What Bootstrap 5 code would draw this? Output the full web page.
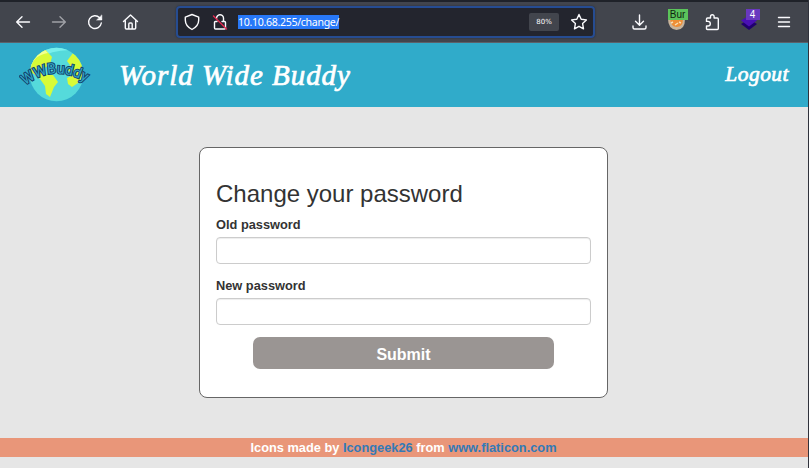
<!DOCTYPE html>
<html lang="en">
<head>
<meta charset="utf-8">
<meta name="viewport" content="width=device-width, initial-scale=1">
<title>World Wide Buddy</title>
<link href="https://cdn.jsdelivr.net/npm/bootstrap@5.3.0/dist/css/bootstrap.min.css" rel="stylesheet">
<style>
body{font-family:"Liberation Sans",Arial,sans-serif;background:#e6e6e6;color:#333;height:468px;overflow:hidden;border-right:1px solid #30323c}
svg{display:block;flex:none}
.toolbar{height:43px;background:#42454d;border-top:2px solid #1f2229;border-bottom:1px solid #5c616a;padding:0 17px 0 14px}
.line-icon{fill:none;stroke:#fbfbfe;stroke-width:1.4;stroke-linecap:round;stroke-linejoin:round}
.nav-icons{width:162px;gap:18px}
.address{width:419px;height:32px;background:#23252e;border:2px solid #264c91;border-radius:4px;padding:0 5px 0 6px;box-shadow:0 0 2px #292c35}
.lock-icon{margin-left:11px}
.url{font:10.6px/14px "Noto Sans",sans-serif;color:#fff;background:#2878f8;margin-left:9px;letter-spacing:-.32px}
.zoom-level{font:7px/18px "DejaVu Sans",sans-serif;background:#42454d;color:#fbfbfe;width:30px;height:18px;border-radius:2px;text-align:center}
.star-icon{margin-left:11px}
.ext-icons{gap:19.5px}
.ext-badge{top:-4px;font:10px/11px "Liberation Sans",sans-serif;text-align:center}
.badge-word{left:1px;width:20px;background:#5bc45b;color:#10250f}
.badge-count{left:6px;width:14px;background:#6938bf;color:#fff}
.site-head{height:64px;background:#30abca;padding:0 19px}
.script-face{font-family:"Z003","URW Chancery L","Monotype Corsiva","Liberation Serif",serif;font-style:italic;font-weight:400;-webkit-text-stroke:.7px #fff;color:#fff;line-height:1;text-decoration:none}
.site-name{font-size:29px;margin-left:25px;letter-spacing:.97px}
.logout{font-size:21.5px;letter-spacing:.45px}
.panel{width:409px;height:251px;margin:40px 0 0 199px;border:1px solid #666;border-radius:8px;background:#fff;padding:32px 16px 0}
.panel h1{font-size:24px;line-height:28px;font-weight:400;margin:0 0 8px}
.panel label{font-size:12.8px;line-height:18px;font-weight:700;display:block;margin-bottom:3px}
.panel .form-control{height:27px;min-height:0;padding:4px 9px;border:1px solid #ccc;border-radius:4px;box-shadow:inset 0 1px 1px rgba(0,0,0,.075);font-size:12px}
.field-row{margin-bottom:13px}
.field-row + .field-row{margin-bottom:12px}
.submit-btn{width:301px;height:32px;background:#9a9593;color:#fff;border:0;border-radius:7px;font-size:16px;font-weight:700;padding:3px 0 0;line-height:20px}
.credit{height:19px;margin-top:40px;background:#e99679;color:#fff;font-size:12.8px;font-weight:700;line-height:20px;padding-right:1px}
.credit a{color:#337ab7;text-decoration:none}
.logo-text{font-family:Roboto,sans-serif;font-size:14.5px;font-weight:400;fill:#30a4c4;stroke:#123e68;stroke-width:1.9;paint-order:stroke}
</style>
</head>
<body>
<nav class="toolbar d-flex align-items-center">
  <div class="nav-icons d-flex align-items-center">
    <svg class="line-icon" width="18" height="18" viewBox="0 0 18 18"><path d="M15.500 9H3M8 3.800L2.700 9 8 14.200"/></svg>
    <svg class="line-icon opacity-50" width="18" height="18" viewBox="0 0 18 18"><path d="M2.500 9H15M10 3.800L15.300 9 10 14.200"/></svg>
    <svg class="line-icon" width="18" height="18" viewBox="0 0 18 18"><path d="M15.300 10A6.400 6.400 0 1 1 13.600 4.700L15.300 6.300"/><path d="M15.800 2.300V7H11Z" fill="#fbfbfe" stroke-width=".6"/></svg>
    <svg class="line-icon" width="18" height="18" viewBox="0 0 18 18"><path d="M1.500 8.500L8.500 2l7 6.500M3.300 7.500V15q0 1 1 1h8.400q1 0 1-1V7.500M6.800 16V11q0-1 1-1h1.400q1 0 1 1v5"/></svg>
  </div>
  <div class="address d-flex align-items-center">
    <svg class="line-icon" width="16" height="18" viewBox="0 0 16 18"><path d="M8 1.500L14.700 4.200V7q0 6-6.700 9.500Q1.300 13 1.300 7V4.200Z"/></svg>
    <svg class="line-icon lock-icon" width="18" height="18" viewBox="0 0 18 18"><path d="M5.500 5.500a3.500 3.500 0 0 1 7-.5V8.500M6 8.500H4.500q-1 0-1 1V15q0 1 1 1h9q1 0 1-1V9.500q0-1-1-1H11"/><path d="M2.500 3L15.500 16" stroke="#e22850"/></svg>
    <span class="url">10.10.68.255/change/</span>
    <span class="zoom-level ms-auto">80%</span>
    <svg class="line-icon star-icon" width="18" height="18" viewBox="0 0 18 18"><path d="M9 1.500l2.200 4.700 5.200.7-3.800 3.600.9 5.300L9 13.300l-4.500 2.500.9-5.300L1.600 6.900l5.200-.7Z"/></svg>
  </div>
  <div class="ext-icons d-flex align-items-center ms-auto">
    <svg class="line-icon" width="16" height="18" viewBox="0 0 16 18"><path d="M8.500 2v10M4.500 8.200l4 4 4-4M2 13v1.500q0 1.500 1.500 1.500h10q1.500 0 1.500-1.500V13"/></svg>
    <div class="position-relative">
      <svg width="18" height="18" viewBox="0 0 18 18"><path d="M1 6h17q0 11-8.500 11Q1 16 1 6Z" fill="#c8b49b"/><path d="M3 6h13q0 8-6.500 8Q4 14 3 6Z" fill="#ef8e35"/><path d="M4 10l2-1M8 12l3-2M12 9l2 1" fill="none" stroke="#f8dfb5" stroke-width="1.500"/></svg>
      <span class="ext-badge badge-word position-absolute">Bur</span>
    </div>
    <svg class="line-icon" width="16" height="18" viewBox="0 0 16 18"><path d="M2.500 8V6q0-1 1-1H6.500V3.500a1.800 1.800 0 0 1 3.600 0V5h3.200q1 0 1 1V15.500q0 1-1 1H3.500q-1 0-1-1V13h1.500a2.300 2.300 0 0 0 0-4.600H2.500Z"/></svg>
    <div class="position-relative">
      <svg width="18" height="18" viewBox="0 0 18 18"><path d="M1 11l8 6 8-6-8-5Z" fill="#20006e"/><path d="M1 7.500l8 6 8-6-8-5Z" fill="#4a10b4"/></svg>
      <span class="ext-badge badge-count position-absolute">4</span>
    </div>
    <svg class="line-icon" width="14" height="18" viewBox="0 0 14 18"><path d="M1.500 4.500h11M1.500 9h11M1.500 13.500h11"/></svg>
  </div>
</nav>
<header class="site-head d-flex align-items-center">
  <svg width="75" height="58" viewBox="19 46 75 58">
    <defs><clipPath id="globe"><circle cx="56.500" cy="74.500" r="26.800"/></clipPath><path id="arc" d="M25 85.500Q56 61 92 86"/></defs>
    <g clip-path="url(#globe)"><rect x="28" y="46" width="58" height="58" fill="#55dadb"/>
    <path d="M30 85Q28 51 70 50L64 46H28Z" fill="#78f0ed"/>
    <path d="M28 47H43L52 57 50 64 42 70 46 75 53 75 58 82 54 87 50 97 46 94 45 86 40 79 34 74 28 72Z" fill="#d8fb38"/>
    <path d="M31 67Q34 55 48 53L43 48 28 55Z" fill="#f2ff92"/>
    <path d="M73 53L67 61 70 65 67 70 75 74 67 78 68 84 72 87 78 83 84 73 83 62Z" fill="#d8fb38"/></g>
    <text class="logo-text" textLength="65"><textPath href="#arc">WWBuddy</textPath></text>
  </svg>
  <span class="site-name script-face">World Wide Buddy</span>
  <a href="#" class="logout script-face ms-auto">Logout</a>
</header>
<main>
  <form class="panel">
    <h1>Change your password</h1>
    <div class="field-row"><label for="oldpw">Old password</label><input id="oldpw" type="password" class="form-control"></div>
    <div class="field-row"><label for="newpw">New password</label><input id="newpw" type="password" class="form-control"></div>
    <button type="button" class="submit-btn d-block mx-auto">Submit</button>
  </form>
</main>
<footer class="credit text-center">Icons made by <a href="#">Icongeek26</a> from <a href="#">www.flaticon.com</a></footer>
</body>
</html>
